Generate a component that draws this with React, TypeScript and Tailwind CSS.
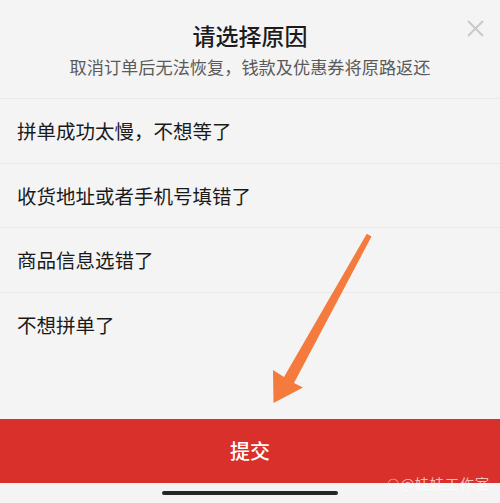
export default function App() {
  const reasons = [
    "拼单成功太慢，不想等了",
    "收货地址或者手机号填错了",
    "商品信息选错了",
    "不想拼单了",
  ];

  return (
    <div
      className="relative w-[500px] h-[503px] overflow-hidden bg-[#f4f4f4] flex flex-col"
      style={{ fontFamily: '"Noto Sans CJK SC", "Noto Sans", sans-serif' }}
    >
      <div className="flex flex-col items-center pt-[20px] pb-[19px]">
        <h1 className="text-[23px] leading-[30px] font-medium text-[#1c1c1c]">请选择原因</h1>
        <p className="mt-[5px] text-[17.2px] leading-[24px] text-[#5a5a5a]">
          取消订单后无法恢复，钱款及优惠券将原路返还
        </p>
      </div>
      <button className="absolute right-[16px] top-[20px] text-[#c9c9c9]">
        <svg width="17" height="17" viewBox="0 0 17 17" fill="none" stroke="currentColor" strokeWidth="2">
          <path d="M1 1L16 16M16 1L1 16" />
        </svg>
      </button>

      <ul className="flex flex-col">
        {reasons.map((r) => (
          <li
            key={r}
            className="h-[64.5px] flex items-center px-[17px] border-t border-[#e9e9e9] text-[19.5px] text-[#1a1a1a]"
          >
            {r}
          </li>
        ))}
      </ul>

      <div className="flex-1" />

      <button className="h-[64px] w-full bg-[#d9302b] text-white text-[20px] font-medium flex items-center justify-center">
        提交
      </button>
      <div className="h-[20px] flex items-start justify-center pt-[8px]">
        <div className="w-[176px] h-[4px] rounded-full bg-[#262626]" />
      </div>

      <span className="absolute right-[10px] bottom-[9px] text-[14px] text-white/70 tracking-[1px]">
        ⚇@娃娃工作室
      </span>

      <svg className="absolute left-0 top-0 pointer-events-none" width="500" height="503">
        <polygon
          points="366.8,233.8 371.5,236.5 294,383 303,387.5 273.5,403 273,370 284,377"
          fill="#f47b3d"
        />
      </svg>
    </div>
  );
}
